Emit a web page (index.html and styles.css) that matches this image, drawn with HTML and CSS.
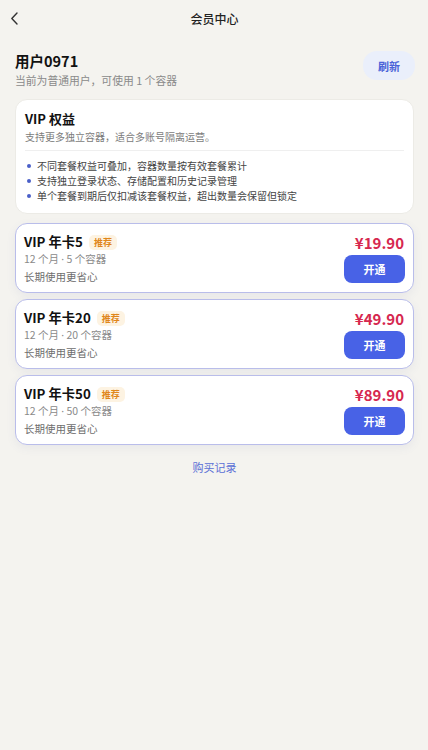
FILE: index.html
```html
<!DOCTYPE html>
<html lang="zh">
<head>
<meta charset="utf-8">
<title>会员中心</title>
<link rel="stylesheet" href="styles.css">
</head>
<body>
<div class="page">
  <header class="topbar">
    <span class="back">
      <svg width="9" height="13" viewBox="0 0 9 13"><path d="M7 1 L1.8 6.5 L7 12" fill="none" stroke="#333" stroke-width="1.4" stroke-linecap="round" stroke-linejoin="round"/></svg>
    </span>
    <h1 class="title">会员中心</h1>
  </header>

  <section class="user">
    <div class="user-info">
      <div class="user-name">用户0971</div>
      <div class="user-sub">当前为普通用户，可使用 1 个容器</div>
    </div>
    <button class="refresh">刷新</button>
  </section>

  <section class="card rights">
    <div class="rights-title">VIP 权益</div>
    <div class="rights-sub">支持更多独立容器，适合多账号隔离运营。</div>
    <div class="divider"></div>
    <ul class="rights-list">
      <li>不同套餐权益可叠加，容器数量按有效套餐累计</li>
      <li>支持独立登录状态、存储配置和历史记录管理</li>
      <li>单个套餐到期后仅扣减该套餐权益，超出数量会保留但锁定</li>
    </ul>
  </section>

  <div class="plans">
    <div class="plan">
      <div class="plan-left">
        <div class="plan-title">VIP 年卡5 <span class="badge">推荐</span></div>
        <div class="plan-meta">12 个月 <span class="dot">·</span> 5 个容器</div>
        <div class="plan-desc">长期使用更省心</div>
      </div>
      <div class="plan-right">
        <div class="price">¥19.90</div>
        <button class="open">开通</button>
      </div>
    </div>
    <div class="plan">
      <div class="plan-left">
        <div class="plan-title">VIP 年卡20 <span class="badge">推荐</span></div>
        <div class="plan-meta">12 个月 <span class="dot">·</span> 20 个容器</div>
        <div class="plan-desc">长期使用更省心</div>
      </div>
      <div class="plan-right">
        <div class="price">¥49.90</div>
        <button class="open">开通</button>
      </div>
    </div>
    <div class="plan">
      <div class="plan-left">
        <div class="plan-title">VIP 年卡50 <span class="badge">推荐</span></div>
        <div class="plan-meta">12 个月 <span class="dot">·</span> 50 个容器</div>
        <div class="plan-desc">长期使用更省心</div>
      </div>
      <div class="plan-right">
        <div class="price">¥89.90</div>
        <button class="open">开通</button>
      </div>
    </div>
  </div>

  <div class="records">购买记录</div>
</div>
</body>
</html>
```

FILE: styles.css
```css
* { box-sizing: border-box; }
html, body {
  margin: 0;
  padding: 0;
  background: #f4f3ef;
}
body {
  font-family: "Noto Sans CJK SC", "Noto Sans", sans-serif;
  color: #1e1e1e;
  width: 428px;
  min-height: 750px;
}
.page {
  padding: 0 14px 0 15px;
}
.topbar {
  height: 37px;
  display: flex;
  align-items: center;
  justify-content: center;
  position: relative;
}
.back {
  position: absolute;
  left: -5px;
  top: 12px;
  display: flex;
}
.title {
  margin: 0;
  font-size: 12px;
  font-weight: 500;
  color: #222;
  line-height: 16px;
}
.user {
  margin-top: 14px;
  display: flex;
  justify-content: space-between;
  align-items: flex-start;
}
.user-name {
  font-size: 14.5px;
  font-weight: 700;
  line-height: 20px;
  color: #111;
}
.user-sub {
  margin-top: 1px;
  font-size: 10.8px;
  line-height: 16px;
  color: #8a8a8a;
}
.refresh {
  width: 52px;
  height: 29px;
  border: none;
  border-radius: 14px;
  background: #eaeffb;
  color: #4a63d8;
  font-family: inherit;
  font-size: 11px;
  font-weight: 700;
  margin-right: -1px;
  padding: 0;
}
.card {
  background: #fff;
  border-radius: 12px;
}
.rights {
  margin-top: 11px;
  padding: 10px 9px 10px 9px;
  border: 1px solid #ecebe6;
}
.rights-title {
  font-size: 13px;
  font-weight: 700;
  line-height: 18px;
  color: #111;
}
.rights-sub {
  margin-top: 2px;
  font-size: 10px;
  line-height: 14px;
  color: #7c7c7c;
}
.divider {
  height: 1px;
  background: #efefef;
  margin-top: 6px;
}
.rights-list {
  list-style: none;
  margin: 7px 0 0;
  padding: 0;
}
.rights-list li {
  display: flex;
  align-items: center;
  font-size: 10px;
  line-height: 15px;
  color: #444;
}
.rights-list li::before {
  content: "";
  width: 4px;
  height: 4px;
  border-radius: 50%;
  background: #4a5fc8;
  margin: 0 6px 0 2px;
  flex: none;
}
.plans {
  margin-top: 9px;
  display: flex;
  flex-direction: column;
  gap: 6px;
}
.plan {
  height: 70px;
  background: #fff;
  border: 1px solid #b9bdea;
  border-radius: 12px;
  padding: 9px 8px 0 8px;
  display: flex;
  justify-content: space-between;
  box-shadow: 0 3px 10px rgba(90, 100, 170, 0.08);
}
.plan-title {
  font-size: 13.3px;
  font-weight: 700;
  line-height: 18px;
  color: #111;
  display: flex;
  align-items: center;
}
.badge {
  margin-left: 6px;
  height: 15px;
  padding: 0 5px;
  border-radius: 5px;
  background: #fdf3e2;
  color: #e0861a;
  font-size: 9px;
  font-weight: 700;
  line-height: 15px;
}
.plan-meta {
  font-size: 10.5px;
  line-height: 16px;
  color: #8a8a8a;
}
.dot {
  font-family: "Noto Sans", sans-serif;
}
.plan-desc {
  margin-top: 2px;
  font-size: 10.5px;
  line-height: 16px;
  color: #6e6e6e;
}
.plan-right {
  display: flex;
  flex-direction: column;
  align-items: flex-end;
}
.price {
  font-size: 15px;
  font-weight: 700;
  line-height: 20px;
  color: #d6284f;
  margin-right: 1px;
}
.open {
  margin-top: 2px;
  width: 61px;
  height: 28px;
  border: none;
  border-radius: 8px;
  background: #4862e6;
  color: #fff;
  font-family: inherit;
  font-size: 11px;
  font-weight: 700;
  padding: 0;
}
.records {
  margin-top: 14px;
  text-align: center;
  font-size: 11px;
  line-height: 16px;
  color: #5b70d6;
}
```
